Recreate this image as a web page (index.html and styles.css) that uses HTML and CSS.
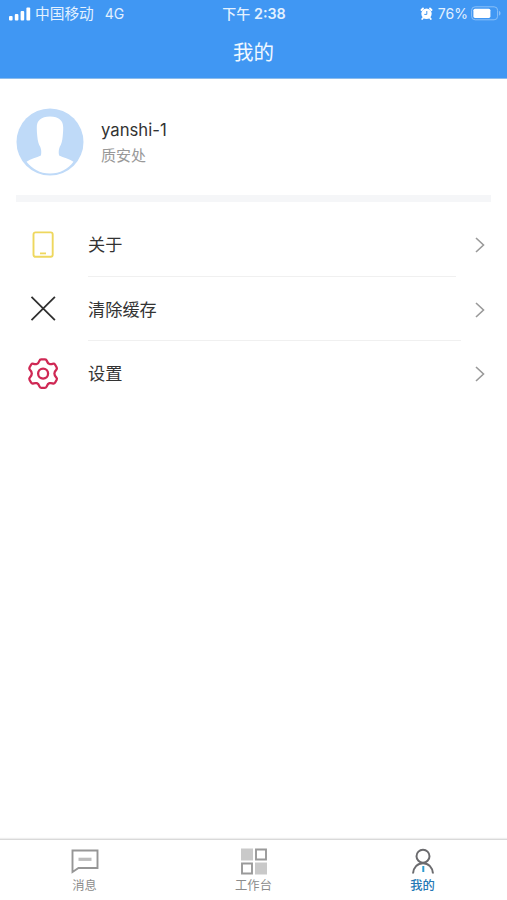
FILE: index.html
```html
<!DOCTYPE html>
<html lang="zh-CN">
<head>
    <meta charset="UTF-8">
    <meta name="viewport" content="width=device-width, initial-scale=1.0">
    <title>我的</title>
    <link rel="stylesheet" href="styles.css">
</head>
<body>
<div class="app">
    <header class="header">
        <div class="status">
            <div class="status-left">
                <svg class="signal" width="22" height="14" viewBox="0 0 22 14" fill="#fff">
                    <rect x="0" y="9" width="3.6" height="4.5" rx="1"/>
                    <rect x="5.8" y="7" width="3.6" height="6.5" rx="1"/>
                    <rect x="11.6" y="4" width="3.6" height="9.5" rx="1"/>
                    <rect x="17.4" y="0.5" width="3.8" height="13" rx="1"/>
                </svg>
                <span class="carrier">中国移动</span>
                <span class="network">4G</span>
            </div>
            <div class="status-time">下午 <span class="clock">2:38</span></div>
            <div class="status-right">
                <svg width="13" height="13" viewBox="0 0 13 13">
                    <path d="M1.500 3L3 1.500M11.500 3L10 1.500M3 11l-.8 1M10 11l.8 1" stroke="#fff" stroke-width="1.800" stroke-linecap="round"/>
                    <circle cx="6.5" cy="6.800" r="5.2" fill="#fff"/>
                    <path d="M6.8 4v3.4H4.3" fill="none" stroke="#4097f3" stroke-width="1"/>
                </svg>
                <span class="percent">76%</span>
                <svg width="30" height="15" viewBox="0 0 30 15">
                    <rect x="0.6" y="0.8" width="26" height="13" rx="3.5" fill="none" stroke="#8ac0f8"/>
                    <rect x="2.4" y="2.7" width="17" height="9.2" rx="1.6" fill="#fff"/>
                    <path d="M28 5v4.6c1-.4 1.5-1.2 1.5-2.3S29 5.400 28 5z" fill="#8ac0f8"/>
                </svg>
            </div>
        </div>
        <h1 class="title">我的</h1>
    </header>

    <main class="content">
        <section class="profile">
            <svg class="avatar" width="68" height="68" viewBox="0 0 68 68">
                <circle cx="34" cy="34" r="33.500" fill="#bfdaf8"/>
                <path d="M34 8.500c-9 0-13.200 4-13.200 11 0 3.500.2 6 .5 9 .4 4.500 1.200 7.500 3 10.500 1 2.500 1.300 5.500.6 8.500-4.400 2.500-9.900 3-14.400 6.300C16 61 24 65.500 34 65.500s18.500-4.500 23.500-11.700C53 50.500 47.500 50 43.100 47.500c-.7-3-.4-6 .6-8.500 1.800-3 2.600-6 3-10.500.3-3 .5-5.500.5-9C47.200 12.500 43 8.500 34 8.500z" fill="#fff"/>
            </svg>
            <div class="profile-text">
                <div class="name">yanshi-1</div>
                <div class="dept">质安处</div>
            </div>
        </section>

        <div class="divider"></div>

        <nav class="menu">
            <a class="menu-item">
                <span class="menu-icon">
                    <svg width="22" height="28" viewBox="0 0 22 28" fill="none" stroke="#eed75e">
                        <rect x="1.500" y="1.400" width="19.200" height="24.400" rx="2" stroke-width="1.900"/>
                        <path d="M8 22.400h6" stroke-width="1.800"/>
                    </svg>
                </span>
                <span class="menu-label">关于</span>
                <svg class="arrow" width="10" height="16" viewBox="0 0 10 16"><path d="M1 1l7.500 7L1 15"/></svg>
            </a>
            <a class="menu-item">
                <span class="menu-icon">
                    <svg width="26" height="26" viewBox="0 0 26 26" fill="none" stroke="#303030" stroke-width="1.800">
                        <path d="M1.500 .8l23.400 23.400M24.900 .8L1.500 24.200"/>
                    </svg>
                </span>
                <span class="menu-label wide">清除缓存</span>
                <svg class="arrow" width="10" height="16" viewBox="0 0 10 16"><path d="M1 1l7.500 7L1 15"/></svg>
            </a>
            <a class="menu-item">
                <span class="menu-icon">
                    <svg width="32" height="32" viewBox="0 0 32 32" fill="none" stroke="#cf2854" stroke-width="2.300" stroke-linejoin="round">
                        <path d="M14.200 1.300H18Q19.300 1.300 19.900 3Q20.700 5.400 22.400 6Q23.900 6.400 25.600 5.800Q27.200 5.200 28 6.500L29.700 9.500Q30.300 10.800 29.200 11.900Q27.400 13.600 27.400 15.600Q27.400 17.600 29.200 19.300Q30.300 20.400 29.700 21.700L28 24.700Q27.200 26 25.600 25.400Q23.900 24.800 22.400 25.200Q20.700 25.800 19.900 28.200Q19.300 29.900 18 29.900H14.200Q12.900 29.900 12.300 28.200Q11.500 25.800 9.800 25.200Q8.300 24.800 6.600 25.400Q5 26 4.200 24.700L2.500 21.700Q1.900 20.400 3 19.300Q4.800 17.600 4.800 15.600Q4.800 13.600 3 11.900Q1.900 10.800 2.500 9.500L4.200 6.500Q5 5.200 6.600 5.800Q8.300 6.400 9.800 6Q11.500 5.400 12.300 3Q12.900 1.300 14.200 1.300Z"/>
                        <circle cx="16.100" cy="15.600" r="5"/>
                    </svg>
                </span>
                <span class="menu-label">设置</span>
                <svg class="arrow" width="10" height="16" viewBox="0 0 10 16"><path d="M1 1l7.500 7L1 15"/></svg>
            </a>
        </nav>
    </main>

    <footer class="tabbar">
        <a class="tab">
            <svg width="28" height="28" viewBox="0 0 28 28" fill="none">
                <path d="M1.500 3.500h25v17.500H7.500l-6 4z" stroke="#969696" stroke-width="1.900"/>
                <path d="M7.500 12.300h13" stroke="#bcbcbc" stroke-width="3.200"/>
            </svg>
            <span>消息</span>
        </a>
        <a class="tab">
            <svg width="28" height="28" viewBox="0 0 28 28">
                <path d="M1 1.500h12v12H1zM15 15.500h12v12H15z" fill="#c9c9c9"/>
                <path d="M16 2.500h10v10H16zM2 16.500h10v10H2z" fill="none" stroke="#9a9a9a" stroke-width="1.900"/>
            </svg>
            <span>工作台</span>
        </a>
        <a class="tab active">
            <svg width="28" height="28" viewBox="0 0 28 28" fill="none" stroke="#6b6b6e" stroke-width="2">
                <circle cx="14" cy="9.200" r="6.500"/>
                <path d="M4 26.500c.3-6 4.500-10.300 10-10.300s9.700 4.300 10 10.300"/>
                <path d="M14.300 19v6" stroke="#2d9bd0"/>
            </svg>
            <span>我的</span>
        </a>
    </footer>
</div>
</body>
</html>
```

FILE: styles.css
```css
* { box-sizing: border-box; }
body {
    margin: 0;
    font-family: Inter, "Noto Sans CJK SC", sans-serif;
    background-color: #fff;
    color: #333;
}
.app {
    display: flex;
    flex-direction: column;
    height: 900px;
}
svg {
    display: block;
    flex: none;
}

/* Header */
.header {
    height: 79px;
    background-color: #4097f3;
    border-bottom: 1px solid #8cbcec;
    color: #f0f8ff;
}
.status {
    display: grid;
    grid-template-columns: 1fr auto 1fr;
    align-items: center;
    height: 27px;
    padding: 0 6px 0 9px;
    font-size: 14px;
    line-height: 20px;
    color: #e3f1ff;
}
.status-left, .status-right {
    display: flex;
    align-items: center;
}
.status-right {
    justify-content: flex-end;
}
.carrier {
    margin-left: 4px;
    font-size: 14.7px;
}
.network {
    margin-left: 11px;
}
.status-time {
    padding-right: 2px;
    font-weight: 500;
}
.clock {
    font-weight: 600;
    font-size: 14.3px;
}
.percent {
    margin: 0 3px 0 5px;
}
.title {
    margin: 0;
    text-align: center;
    font-size: 20.5px;
    font-weight: 400;
    line-height: 52px;
}

/* Profile */
.content {
    flex: 1;
}
.profile {
    display: flex;
    height: 116px;
    padding: 29px 16px 0;
}
.profile-text {
    margin-left: 17px;
    padding-top: 10px;
}
.name {
    font-size: 16.7px;
    line-height: 24px;
}
.dept {
    margin-top: 3px;
    font-size: 15px;
    line-height: 22px;
    color: #999;
}
.divider {
    height: 7px;
    margin: 0 16px;
    background-color: #f5f6f8;
}

/* Menu */
.menu {
    padding-top: 10px;
}
.menu-item {
    display: grid;
    grid-template-columns: 88px 1fr 51px;
    align-items: center;
    height: 64.5px;
}
.menu-icon {
    display: flex;
    justify-content: center;
    width: 86px;
    padding-top: 1px;
}
.menu-label {
    height: 64.5px;
    padding-top: 3px;
    font-size: 17.2px;
    line-height: 60px;
    border-bottom: 1px solid #f0f0f0;
}
.menu-label.wide {
    margin-right: -5px;
}
.menu-item:last-child .menu-label {
    border-bottom: none;
}
.arrow {
    margin: 2px 0 0 19px;
    fill: none;
    stroke: #999;
    stroke-width: 1.6;
}

/* Bottom tabs */
.tabbar {
    display: flex;
    height: 61px;
    border-top: 1px solid #d9d9d9;
    box-shadow: 0 -1px 1px #eee;
}
.tab {
    flex: 1;
    display: flex;
    flex-direction: column;
    align-items: center;
    padding-top: 7px;
    font-size: 12.3px;
    line-height: 22px;
    color: #8c8c8c;
}
.tab.active {
    color: #2478b5;
    font-weight: 500;
}
```
